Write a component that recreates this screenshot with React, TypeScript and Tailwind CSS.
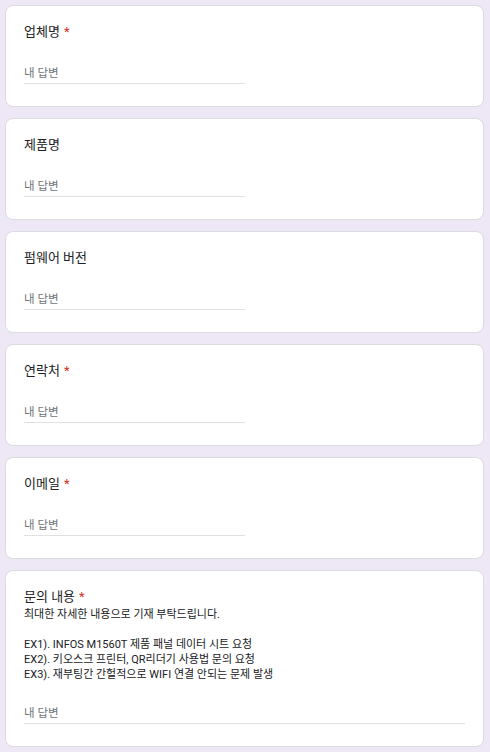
import React from 'react';

type Question = {
  title: string;
  required?: boolean;
  description?: string[];
  wide?: boolean;
};

const questions: Question[] = [
  { title: '업체명', required: true },
  { title: '제품명' },
  { title: '펌웨어 버전' },
  { title: '연락처', required: true },
  { title: '이메일', required: true },
  {
    title: '문의 내용',
    required: true,
    wide: true,
    description: [
      '최대한 자세한 내용으로 기재 부탁드립니다.',
      '',
      'EX1). INFOS M1560T 제품 패널 데이터 시트 요청',
      'EX2). 키오스크 프린터, QR리더기 사용법 문의 요청',
      'EX3). 재부팅간 간헐적으로 WIFI 연결 안되는 문제 발생',
    ],
  },
];

const QuestionCard: React.FC<{ q: Question }> = ({ q }) => {
  return (
    <div className="bg-white border border-[#dadce0] rounded-[8px] pt-[16px] pb-[22px] px-[18px]">
      <div className="text-[13px] leading-[20px] text-[#202124]">
        {q.title}
        {q.required && <span className="text-[#d93025] ml-[4px]">*</span>}
      </div>
      {q.description && (
        <div className="text-[11px] leading-[15px] text-[#202124]">
          {q.description.map((line, i) => (
            <div key={i} className="h-[15px]">{line}</div>
          ))}
        </div>
      )}
      <div
        className={`mt-[18px] h-[24px] border-b border-[#e0e0e0] flex items-end pb-[2px] text-[11.5px] leading-[15px] text-[#70757a] ${
          q.wide ? 'w-full' : 'w-[221px]'
        }`}
      >
        내 답변
      </div>
    </div>
  );
};

export default function App() {
  return (
    <div
      className="min-h-screen bg-[#ede7f6] pt-[5px] pl-[5px] pr-[6px] pb-[4px] flex flex-col gap-[11px]"
      style={{ fontFamily: 'Roboto, "Noto Sans CJK KR", sans-serif' }}
    >
      {questions.map((q) => (
        <QuestionCard key={q.title} q={q} />
      ))}
    </div>
  );
}
